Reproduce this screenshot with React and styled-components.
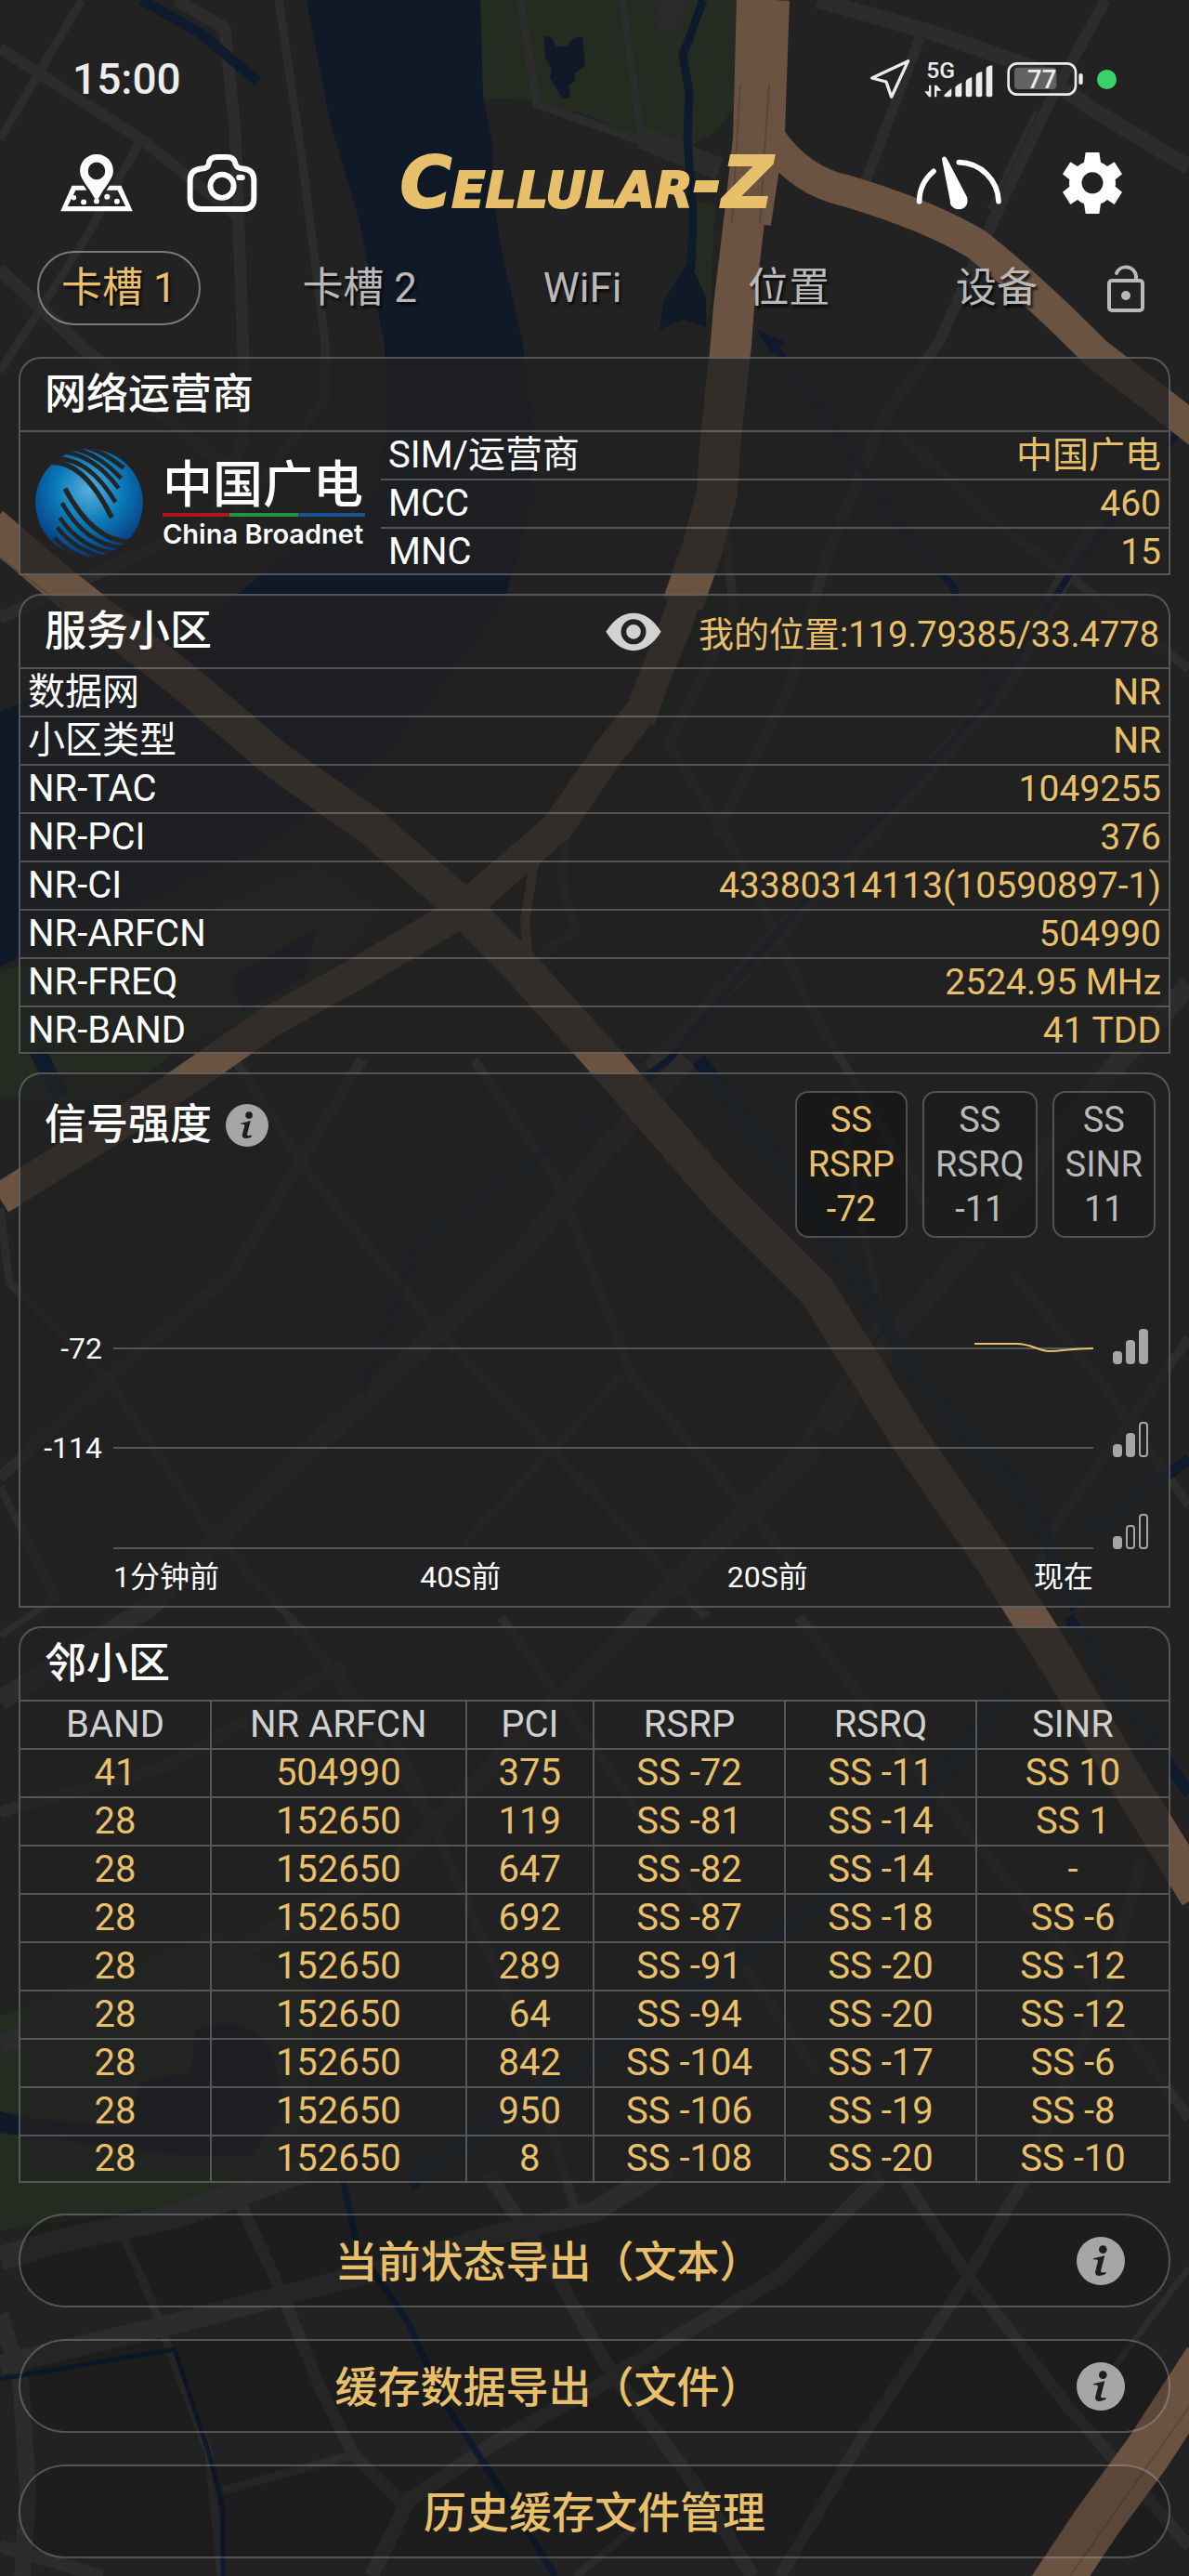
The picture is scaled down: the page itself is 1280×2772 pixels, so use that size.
import React, { useState } from "react"
import styled, { createGlobalStyle } from "styled-components"

const colors = {
  gold: "#e8c06c",
  white: "#ffffff",
  muted: "#b9b9b9",
  head: "#d0d0d0",
  line: "rgba(255, 255, 255, 0.24)",
  page: "#222222",
  panel: "rgba(34, 34, 34, 0.77)",
}

const GlobalStyle = createGlobalStyle`
  * { box-sizing: border-box; }
  body {
    margin: 0;
    background: ${colors.page};
    color: ${colors.white};
    font-family: Roboto, "Noto Sans CJK SC", sans-serif;
    font-size: 40px;
  }
  button { font: inherit; color: inherit; cursor: pointer; }
  svg { display: block; flex: none; }
`

const Page = styled.div`
  position: relative;
  padding: 58px 20px 19px;
  overflow: hidden;
`

const MapLayer = styled.svg`
  position: absolute;
  top: 0;
  left: 0;
  width: 100%;
  height: 100%;
  z-index: -1;
`

const StatusBar = styled.div`
  display: flex;
  align-items: center;
  justify-content: space-between;
  height: 54px;
  padding: 0 58px;
  color: #ececec;
`

const Clock = styled.time`
  font-size: 46px;
  font-weight: 500;
`

const StatusIcons = styled.div`
  display: flex;
  align-items: center;
  gap: 15px;
`

const RecordDot = styled.span`
  width: 21px;
  height: 21px;
  border-radius: 50%;
  background: #3bd16a;
`

const Header = styled.header`
  display: flex;
  align-items: center;
  justify-content: space-between;
  height: 90px;
  margin-top: 40px;
  padding: 0 52px 0 45px;
`

const Side = styled.div`
  display: flex;
  align-items: center;
  gap: ${p => p.$gap}px;
`

const IconButton = styled.button`
  display: block;
  padding: 0;
  border: 0;
  background: none;
`

const Brand = styled.h1`
  margin: 0;
  font-family: "DejaVu Sans", sans-serif;
  font-size: 76px;
  font-style: italic;
  font-weight: 700;
  font-variant: small-caps;
  line-height: 88px;
  white-space: nowrap;
  color: ${colors.gold};
  -webkit-text-stroke: 2px ${colors.gold};
`

const Nav = styled.nav`
  display: flex;
  align-items: center;
  gap: 49px;
  margin: 28px 0 34px;
  padding: 0 28px 0 20px;
`

const Tabs = styled.div`
  display: flex;
  flex: 1;
  justify-content: space-between;
`

const Tab = styled.button`
  height: 80px;
  padding: 0 24px;
  border: 2px solid ${p => (p.$active ? "rgba(255, 255, 255, 0.4)" : "transparent")};
  border-radius: 40px;
  background: none;
  font-size: 44px;
  line-height: 76px;
  white-space: nowrap;
  text-shadow: 2px 3px 3px rgba(0, 0, 0, 0.8);
  color: ${p => (p.$active ? colors.gold : colors.muted)};
`

const Panels = styled.main`
  display: flex;
  flex-direction: column;
  gap: 20px;
`

const Panel = styled.section`
  border: 2px solid ${colors.line};
  border-radius: 24px 24px 0 0;
  background: ${colors.panel};
`

const PanelHead = styled.div`
  display: flex;
  align-items: center;
  height: 79px;
  padding: 0 10px 0 26px;
  border-bottom: 2px solid ${colors.line};
`

const Title = styled.h2`
  margin: 0;
  font-size: 45px;
  font-weight: 500;
  line-height: 60px;
  white-space: nowrap;
`

const Position = styled.span`
  margin-left: 40px;
  font-size: 38px;
  color: ${colors.gold};
`

const HeadSpacer = styled.div`
  flex: 1;
`

const Rows = styled.dl`
  flex: 1;
  margin: 0;
`

const Row = styled.div`
  display: flex;
  justify-content: space-between;
  height: 52px;
  padding: 0 8px;
  line-height: 50px;
  border-bottom: 2px solid ${colors.line};
  &:last-child {
    height: 48px;
    border-bottom: 0;
  }
`

const Label = styled.dt`
  white-space: nowrap;
`

const Value = styled.dd`
  margin: 0;
  font-size: 39px;
  white-space: nowrap;
  color: ${colors.gold};
`

const Split = styled.div`
  display: flex;
`

const Carrier = styled.div`
  display: flex;
  align-items: center;
  gap: 20px;
  width: 388px;
  padding-left: 15px;
`

const CarrierNames = styled.div`
  display: flex;
  flex-direction: column;
  width: 218px;
`

const CarrierCn = styled.span`
  font-family: "Noto Sans CJK SC", sans-serif;
  font-size: 54px;
  font-weight: 500;
  line-height: 56px;
  white-space: nowrap;
`

const Stripe = styled.span`
  height: 4px;
  margin: 6px 0 2px;
  background: linear-gradient(90deg, #b01518 33%, #1f9148 33% 67%, #15548f 67%);
`

const CarrierEn = styled.span`
  font-family: Inter, sans-serif;
  font-size: 29px;
  font-weight: 600;
  line-height: 34px;
  white-space: nowrap;
`

const SignalPanel = styled(Panel)`
  padding-bottom: 10px;
`

const SignalTop = styled.div`
  display: flex;
  align-items: flex-start;
  padding: 18px 14px 0 26px;
`

const SignalTitle = styled.div`
  display: flex;
  align-items: center;
  flex: 1;
  gap: 15px;
  padding-top: 7px;
`

const Chips = styled.div`
  display: flex;
  gap: 16px;
`

const Chip = styled.button`
  display: flex;
  flex-direction: column;
  align-items: center;
  padding: 5px 12px;
  border: 2px solid ${colors.line};
  border-radius: 14px;
  background: rgba(0, 0, 0, ${p => (p.$active ? 0.25 : 0.12)});
  font-size: 38px;
  line-height: 48px;
  color: ${p => (p.$active ? colors.gold : colors.muted)};
`

const Chart = styled.div`
  display: grid;
  grid-template-columns: 88px 1fr 49px;
  column-gap: 12px;
  margin-top: 97px;
  padding-right: 20px;
`

const Plot = styled.svg`
  width: 100%;
  height: 239px;
`

const YLabels = styled.div`
  font-size: 32px;
  line-height: 44px;
  text-align: right;
`

const YLabel = styled.div`
  height: 107px;
`

const Levels = styled.div`
  display: flex;
  flex-direction: column;
  justify-content: space-between;
  padding-left: 9px;
`

const XLabels = styled.div`
  display: flex;
  grid-column: 2;
  margin-top: 8px;
  font-size: 32px;
  line-height: 42px;
`

const XLabel = styled.span`
  flex: ${p => (p.$last ? "none" : 1)};
  white-space: nowrap;
`

const Table = styled.table`
  width: 100%;
  table-layout: fixed;
  border-collapse: separate;
  border-spacing: 0;
`

const Cell = styled.td`
  height: 52px;
  padding: 0;
  border-bottom: 2px solid ${colors.line};
  border-right: 2px solid ${colors.line};
  font-size: 40px;
  font-weight: 400;
  line-height: 50px;
  text-align: center;
  color: ${colors.gold};
  &:last-child { border-right: 0; }
  tbody tr:last-child & {
    height: 48px;
    line-height: 48px;
    border-bottom: 0;
  }
`

const HeadCell = styled(Cell)`
  color: ${colors.head};
`

const Actions = styled.div`
  display: flex;
  flex-direction: column;
  gap: 34px;
  margin-top: 33px;
`

const Action = styled.div`
  display: flex;
  align-items: center;
  height: 101px;
  border: 2px solid ${colors.line};
  border-radius: 50px;
  background: rgba(0, 0, 0, 0.14);
`

const ActionButton = styled.button`
  flex: 1;
  height: 97px;
  padding: 0 0 6px;
  border: 0;
  background: none;
  font-size: 46px;
  font-weight: 500;
  color: ${colors.gold};
`

const ActionInfo = styled(IconButton)`
  width: 99px;
  flex: none;
`

const info = [
  ["数据网", "NR"],
  ["小区类型", "NR"],
  ["NR-TAC", "1049255"],
  ["NR-PCI", "376"],
  ["NR-CI", "43380314113(10590897-1)"],
  ["NR-ARFCN", "504990"],
  ["NR-FREQ", "2524.95 MHz"],
  ["NR-BAND", "41 TDD"],
]

const operator = [
  ["SIM/运营商", "中国广电"],
  ["MCC", "460"],
  ["MNC", "15"],
]

const signals = [
  ["RSRP", "-72"],
  ["RSRQ", "-11"],
  ["SINR", "11"],
]

const columns = [
  ["BAND", 3],
  ["NR ARFCN", 4],
  ["PCI", 2],
  ["RSRP", 3],
  ["RSRQ", 3],
  ["SINR", 3],
]

const neighbors = [
  ["41", "504990", "375", "SS -72", "SS -11", "SS 10"],
  ["28", "152650", "119", "SS -81", "SS -14", "SS 1"],
  ["28", "152650", "647", "SS -82", "SS -14", "-"],
  ["28", "152650", "692", "SS -87", "SS -18", "SS -6"],
  ["28", "152650", "289", "SS -91", "SS -20", "SS -12"],
  ["28", "152650", "64", "SS -94", "SS -20", "SS -12"],
  ["28", "152650", "842", "SS -104", "SS -17", "SS -6"],
  ["28", "152650", "950", "SS -106", "SS -19", "SS -8"],
  ["28", "152650", "8", "SS -108", "SS -20", "SS -10"],
]

const tabs = ["卡槽 1", "卡槽 2", "WiFi", "位置", "设备"]

// [path, width]
const streets = [
  ["M88 0 L0 150", 9],
  ["M0 52 L155 152 L262 238", 12],
  ["M152 150 L90 260 L0 400", 9],
  ["M0 290 L90 375 L240 500 L262 560", 14],
  ["M190 0 L242 30 L253 140 L262 380 L262 470 L230 560 L0 665", 13],
  ["M300 0 L325 170 L350 370 L350 430 L262 540", 9],
  ["M560 0 L578 112 L690 152", 9],
  ["M670 0 L690 145", 8],
  ["M690 148 L775 182", 24],
  ["M880 0 L1000 34 L1110 72 L1180 120 L1280 180", 17],
  ["M1190 0 L1130 110 L1075 225 L1010 370 L950 450 L890 600 L850 740 L770 900", 12],
  ["M992 36 L930 200", 11],
  ["M1115 120 L1065 225", 5],
  ["M780 560 L790 660 L720 800 L800 930 L870 1080 L1000 1300", 10],
  ["M950 450 L1070 560 L1150 620 L1280 720", 10],
  ["M1180 560 L1080 740 L880 960 L700 1150", 18],
  ["M610 880 L605 950 L620 1000 L580 1030", 10],
  ["M1280 1060 L1180 1170 L1080 1300 L960 1440 L890 1540", 22],
  ["M240 1120 L330 1260 L470 1430 L670 1640 L760 1740", 10],
  ["M510 1140 L600 1270 L680 1480 L800 1620 L870 1700", 10],
  ["M740 1140 L640 1250 L560 1350 L400 1500 L290 1600 L160 1730 L0 1830", 22],
  ["M390 1140 L250 1370 L120 1480 L0 1590", 12],
  ["M0 1300 L10 1380 L120 1490 L220 1640 L330 1760 L470 1970", 9],
  ["M670 1480 L500 1660", 8],
  ["M1280 1440 L1130 1650 L1100 1740", 10],
  ["M1090 1370 L1180 1480 L1280 1620", 10],
  ["M880 1560 L690 1740 L560 1870 L420 2010 L220 2120 L0 2200", 20],
  ["M900 1180 L950 1420 L860 1560 L680 1740", 8],
  ["M0 1600 L60 1720 L0 1760", 8],
  ["M310 1740 L430 1880 L560 2180 L620 2380", 10],
  ["M540 1740 L640 1880 L720 2000 L880 2230", 10],
  ["M860 1740 L1000 1920 L1180 2140 L1280 2280", 11],
  ["M1230 2000 L1190 2140 L1100 2350 L1030 2470 L930 2620 L840 2772", 13],
  ["M0 1950 L180 1900 L370 1790", 12],
  ["M0 2430 L70 2410 L190 2385 L330 2335", 26],
  ["M0 2545 L190 2500 L420 2440 L530 2405 L640 2380 L720 2330", 22],
  ["M258 2370 L300 2460 L345 2570 L380 2640 L440 2700", 13],
  ["M0 2490 L22 2560 L30 2680 L24 2772", 18],
  ["M130 2400 L165 2480 L190 2550 L225 2640 L238 2772", 9],
  ["M240 2680 L385 2640", 9],
  ["M526 2340 L600 2450 L650 2540 L760 2690 L810 2772", 15],
  ["M950 2340 L840 2450 L720 2520 L640 2570 L530 2630 L440 2690 L400 2772", 16],
  ["M970 2340 L1050 2460 L1150 2590 L1280 2740", 13],
  ["M1280 2440 L1190 2560", 7],
  ["M720 2690 L620 2772", 8],
  ["M0 2740 L110 2772", 14],
]

const streams = [
  ["M152 0 L215 35 L278 88", 11],
  ["M757 0 L735 60 L742 100 L740 150 L746 230 L744 290", 9],
  ["M832 370 L905 470 L965 560 L1025 630 L1070 740", 8],
  ["M1280 450 L1150 620 L1060 760 L900 930 L720 1140 L450 1340 L390 1500", 7],
  ["M752 1140 L860 1280 L950 1420 L985 1480 L1110 1620 L1160 1730", 16],
  ["M1280 1570 L1170 1650", 12],
  ["M1085 1820 L940 2010 L820 2090 L700 2180 L520 2290 L440 2350", 18],
  ["M368 2340 L385 2420 L440 2500 L475 2580 L540 2680 L598 2772", 7],
  ["M0 2560 L188 2528 L225 2640 L240 2700 L240 2772", 5],
  ["M40 1130 L65 1180", 18],
  ["M1150 1740 L1280 1930", 12],
]

const highways = [
  ["M815 0 L811 150 L802 230 L790 330 L787 370 L775 480 L772 530 L756 590 L735 650", 44],
  ["M742 630 L725 680 L704 730 L688 775", 34],
  ["M830 0 L825 140 L810 240", 40],
  ["M830 150 Q862 195 910 205 Q1000 232 1050 262 Q1100 300 1180 380 L1290 465", 34],
  ["M690 765 L655 810 L600 890 L490 985 L380 1050 L290 1100 L160 1190 L0 1290", 34],
  ["M-10 565 L60 625 L200 735 L300 820 L400 890 L490 968 L560 1040 L650 1140 L780 1290 L880 1390 L980 1550 L1070 1680 L1140 1790 L1210 1910 L1290 2040", 40],
  ["M600 880 L575 930 L565 990 L570 1050 L580 1070", 10],
  ["M1300 2540 L1235 2640 L1180 2715 L1130 2790", 52],
]

function MapBackground() {
  return (
    <MapLayer viewBox="0 0 1280 2772" preserveAspectRatio="xMidYMin slice" aria-hidden="true">
      <g fill="#242b20">
        <path d="M515 0 H805 L795 110 L770 142 L745 156 L690 150 L640 126 L575 108 L520 105 Z" />
        <path d="M742 215 L770 220 L764 345 L745 310 Z" />
        <path d="M0 1045 L180 1000 L340 930 L410 980 L320 1080 L200 1120 L120 1190 L0 1180 Z" />
        <path d="M0 2170 L230 2080 L340 2140 L330 2270 L300 2330 L204 2370 L0 2400 Z" />
      </g>
      <g fill="#101927">
        <path d="M330 0 H517 L520 105 L531 160 L529 200 L540 270 L563 370 L574 460 L572 540 L545 640 L490 720 L400 830 L270 920 L120 985 L0 1040 V765 L120 720 L210 680 L290 610 L360 570 L410 525 L415 460 L414 370 L385 230 L355 130 Z" />
        <path d="M586 40 Q594 36 598 50 H610 Q618 38 627 40 L630 70 L618 80 Q622 88 612 92 L614 104 Q606 110 602 100 L592 84 L594 74 L587 62 Z" />
        <path d="M742 280 L714 325 L710 355 L735 344 L760 352 V320 Z" />
        <path d="M815 355 L845 368 L830 380 Z" />
        <path d="M210 2185 Q260 2165 290 2200 L310 2270 L270 2320 L200 2320 L120 2310 L40 2300 L0 2295 V2272 L40 2280 L140 2290 L150 2240 L205 2230 Z" />
        <path d="M250 1050 L340 1000 L330 1050 L260 1090 Z" />
      </g>
      <path d="M705 0 H745 L725 40 L710 35 Z" fill="#2a2a2a" />
      <g fill="none" stroke="#2c2c2c" strokeLinejoin="round">
        {streets.map(([d, w]) => <path key={d} d={d} strokeWidth={w} />)}
      </g>
      <g fill="none" stroke="#0f1a2c" strokeLinejoin="round">
        {streams.map(([d, w]) => <path key={d} d={d} strokeWidth={w} />)}
      </g>
      <g fill="none" stroke="#6b5342" strokeLinejoin="round">
        {highways.map(([d, w]) => <path key={d} d={d} strokeWidth={w} />)}
      </g>
      <g fill="none" stroke="#59483a" strokeWidth="2">
        <path d="M797 90 L788 240" />
        <path d="M828 90 L818 240" />
        <path d="M0 600 L120 690" />
        <path d="M1280 2590 L1152 2772" />
      </g>
    </MapLayer>
  )
}

const InfoIcon = ({ size }) => (
  <svg width={size} height={size} viewBox="57 66 156 156">
    <circle cx="135" cy="144" r="78" fill="#a6a6a6" />
    <circle cx="142" cy="107" r="13" fill="#1e1e1e" />
    <path d="M111 136 Q130 132 148 127 L135 176 Q134 184 152 180 L151 186 Q118 200 117 180 L126 145 Q127 138 111 139 Z" fill="#1e1e1e" />
  </svg>
)

const LocationIcon = () => (
  <svg width="44" height="44" viewBox="109 43 132 132" fill="none" stroke="#ececec" strokeWidth="10" strokeLinejoin="round">
    <path d="M117 106 L234 51 L180 167 L163 118 Z" />
  </svg>
)

const CellIcon = () => (
  <svg width="74" height="52" viewBox="284 22 222 156" fill="#ececec">
    <text x="291" y="96" fontSize="74" fontWeight="500">5G</text>
    <path d="M299 120 V158 H306 V120 Z M285 140 L299 158 V140 Z M317 120 V158 H324 V120 Z M324 120 L340 138 H324 Z" />
    <path d="M348 152 L372 130 V152 Q372 158 366 158 H354 Q348 158 348 152 Z" />
    <path d="M384 128 Q384 122 405 112 V152 Q405 158 399 158 H390 Q384 158 384 152 Z" />
    <path d="M418 110 Q418 100 438 94 V152 Q438 158 432 158 H424 Q418 158 418 152 Z" />
    <path d="M451 90 Q451 80 471 76 V152 Q471 158 465 158 H457 Q451 158 451 152 Z" />
    <path d="M484 68 Q484 58 504 56 V152 Q504 158 498 158 H490 Q484 158 484 152 Z" />
  </svg>
)

const BatteryIcon = () => (
  <svg width="82" height="36" viewBox="551 51 246 108">
    <rect x="575" y="68" width="136" height="70" rx="12" fill="#626262" />
    <rect x="556" y="55" width="217" height="100" rx="28" fill="none" stroke="#ececec" strokeWidth="8" />
    <rect x="783" y="87" width="13" height="36" rx="6" fill="#ececec" />
    <text x="664" y="134" fontSize="82" fontWeight="500" textAnchor="middle" fill="#ececec">77</text>
  </svg>
)

const MapPinIcon = () => (
  <svg width="78" height="62" viewBox="75 78 234 187" fill="#fff">
    <path fillRule="evenodd" d="M192 78 C160 78 138 103 138 132 C138 160 165 180 186 222 H198 C219 180 246 160 246 132 C246 103 224 78 192 78 Z M192 104 A28 28 0 1 1 192 160 A28 28 0 1 1 192 104 Z" />
    <path d="M112 180 H150 L160 195 H124 L98 247 H286 L260 195 H224 L234 180 H272 L309 263 H75 Z" />
    <circle cx="192" cy="230" r="9" />
    <circle cx="118" cy="219" r="8" />
    <circle cx="150" cy="233" r="9" />
    <circle cx="226" cy="216" r="9" />
    <circle cx="258" cy="231" r="9" />
  </svg>
)

const CameraIcon = () => (
  <svg width="76" height="64" viewBox="484 73 230 192" fill="none" stroke="#fff" strokeWidth="18">
    <path d="M532 254 Q495 254 495 218 V160 Q495 125 532 122 Q554 122 556 106 Q558 84 584 84 H614 Q638 84 642 104 Q646 122 668 122 Q703 125 703 160 V218 Q703 254 666 254 Z" />
    <circle cx="599" cy="179" r="38" />
    <path d="M654 151 H665" strokeLinecap="round" />
  </svg>
)

const GaugeIcon = () => (
  <svg width="92" height="58" viewBox="259 352 276 174" fill="none" stroke="#fff" strokeWidth="17" strokeLinecap="round">
    <path d="M270 498 C270 460 288 425 316 401" />
    <path d="M398 372 C470 374 524 430 526 498" />
    <path d="M343 362 Q344 352 354 354 L360 362 L424 484 Q430 510 412 521 Q388 530 373 512 Q369 505 369 494 Z" fill="#fff" stroke="none" />
  </svg>
)

const GearIcon = () => (
  <svg width="64" height="66" viewBox="732 342 192 198" fill="#fff">
    <path fillRule="evenodd" d="M806 342 H850 L855 374 Q866 378 876 387 L899 373 L924 412 L902 430 Q904 441 902 452 L924 470 L899 510 L876 495 Q866 504 855 508 L850 540 H806 L801 508 Q790 504 780 495 L757 510 L732 470 L754 452 Q752 441 754 430 L732 412 L757 373 L780 387 Q790 378 801 374 Z M828 406 A34 34 0 1 0 828 475 A34 34 0 1 0 828 406 Z" />
  </svg>
)

const UnlockIcon = () => (
  <svg width="40" height="52" viewBox="0 0 40 52" fill="none" stroke={colors.muted} strokeWidth="4">
    <rect x="2" y="18" width="36" height="32" rx="3" />
    <path d="M31 18 V13 A11 11 0 0 0 10 10" strokeLinecap="round" />
    <circle cx="20" cy="34" r="5" fill={colors.muted} stroke="none" />
  </svg>
)

const EyeIcon = () => (
  <svg width="60" height="42" viewBox="37 38 180 125">
    <path d="M38 100 Q76 40 127 40 Q178 40 216 100 Q178 161 127 161 Q76 161 38 100 Z" fill="#d2d2d2" />
    <circle cx="127" cy="100" r="32" fill="none" stroke="#222" strokeWidth="17" />
  </svg>
)

const CarrierGlobe = () => (
  <svg width="118" height="118" viewBox="48 65 354 354">
    <defs>
      <radialGradient id="globe" cx="0.5" cy="0.38" r="0.62">
        <stop offset="0" stopColor="#5aaedb" />
        <stop offset="0.5" stopColor="#0a7bb8" />
        <stop offset="1" stopColor="#063a80" />
      </radialGradient>
      <clipPath id="globeClip"><circle cx="225" cy="242" r="174" /></clipPath>
    </defs>
    <g clipPath="url(#globeClip)">
      <circle cx="225" cy="242" r="174" fill="url(#globe)" />
      <g fill="none" stroke="#222527" strokeWidth="14">
        <path d="M85 114 Q200 92 298 290" strokeWidth="16" />
        <path d="M105 100 Q220 90 310 240" />
        <path d="M140 78 Q240 88 320 195" />
        <path d="M170 66 Q254 84 328 163" />
        <path d="M205 58 Q270 76 336 130" />
        <path d="M147 196 Q238 368 360 368" strokeWidth="16" />
        <path d="M137 243 Q216 380 335 386" />
        <path d="M130 290 Q200 392 310 404" />
        <path d="M122 322 Q180 396 275 418" />
        <path d="M113 355 Q155 404 225 424" />
      </g>
    </g>
  </svg>
)

// filled: how many of the three bars are solid
const LevelIcon = ({ filled }) => (
  <svg width="38" height="40" viewBox="0 0 38 40">
    {[[0, 25], [14, 13], [28, 1]].map(([x, y], i) =>
      i < filled
        ? <rect key={x} x={x} y={y} width="10" height={39 - y} rx="4" fill="#a6a6a6" />
        : <rect key={x} x={x + 1} y={y + 1} width="8" height={37 - y} rx="3" fill="none" stroke="#a6a6a6" strokeWidth="2" />
    )}
  </svg>
)

function Fields({ items }) {
  return (
    <Rows>
      {items.map(([label, value]) => (
        <Row key={label}>
          <Label>{label}</Label>
          <Value>{value}</Value>
        </Row>
      ))}
    </Rows>
  )
}

export default function App() {
  const [tab, setTab] = useState(0)
  const [signal, setSignal] = useState(0)

  return (
    <Page>
      <GlobalStyle />
      <MapBackground />
      <StatusBar>
        <Clock>15:00</Clock>
        <StatusIcons>
          <LocationIcon />
          <CellIcon />
          <BatteryIcon />
          <RecordDot />
        </StatusIcons>
      </StatusBar>

      <Header>
        <Side $gap={58}>
          <IconButton aria-label="地图"><MapPinIcon /></IconButton>
          <IconButton aria-label="相机"><CameraIcon /></IconButton>
        </Side>
        <Brand>Cellular-Z</Brand>
        <Side $gap={66}>
          <IconButton aria-label="测速"><GaugeIcon /></IconButton>
          <IconButton aria-label="设置"><GearIcon /></IconButton>
        </Side>
      </Header>

      <Nav>
        <Tabs>
          {tabs.map((name, i) => (
            <Tab key={name} $active={i === tab} onClick={() => setTab(i)}>{name}</Tab>
          ))}
        </Tabs>
        <IconButton aria-label="锁定"><UnlockIcon /></IconButton>
      </Nav>

      <Panels>
        <Panel>
          <PanelHead><Title>网络运营商</Title></PanelHead>
          <Split>
            <Carrier>
              <CarrierGlobe />
              <CarrierNames>
                <CarrierCn>中国广电</CarrierCn>
                <Stripe />
                <CarrierEn>China Broadnet</CarrierEn>
              </CarrierNames>
            </Carrier>
            <Fields items={operator} />
          </Split>
        </Panel>

        <Panel>
          <PanelHead>
            <Title>服务小区</Title>
            <HeadSpacer />
            <IconButton aria-label="显示位置"><EyeIcon /></IconButton>
            <Position>我的位置:119.79385/33.4778</Position>
          </PanelHead>
          <Fields items={info} />
        </Panel>

        <SignalPanel>
          <SignalTop>
            <SignalTitle>
              <Title>信号强度</Title>
              <IconButton aria-label="说明"><InfoIcon size={46} /></IconButton>
            </SignalTitle>
            <Chips>
              {signals.map(([name, value], i) => (
                <Chip key={name} $active={i === signal} onClick={() => setSignal(i)}>
                  <span>SS</span>
                  <span>{name}</span>
                  <span>{value}</span>
                </Chip>
              ))}
            </Chips>
          </SignalTop>
          <Chart>
            <YLabels>
              <YLabel>-72</YLabel>
              <YLabel>-114</YLabel>
            </YLabels>
            <Plot viewBox="0 0 1055 239" preserveAspectRatio="none">
              <path d="M0 22 H1055 M0 129 H1055 M0 237 H1055" stroke="rgba(255,255,255,0.24)" strokeWidth="2" />
              <path d="M927 17 H972 C990 17 995 25 1008 25 C1022 25 1030 22 1055 22" fill="none" stroke={colors.gold} strokeWidth="2" />
            </Plot>
            <Levels>
              <LevelIcon filled={3} />
              <LevelIcon filled={2} />
              <LevelIcon filled={1} />
            </Levels>
            <XLabels>
              <XLabel>1分钟前</XLabel>
              <XLabel>40S前</XLabel>
              <XLabel>20S前</XLabel>
              <XLabel $last>现在</XLabel>
            </XLabels>
          </Chart>
        </SignalPanel>

        <Panel>
          <PanelHead><Title>邻小区</Title></PanelHead>
          <Table>
            <colgroup>
              {columns.map(([name, units]) => <col key={name} style={{ width: `${units / 0.18}%` }} />)}
            </colgroup>
            <thead>
              <tr>{columns.map(([name]) => <HeadCell as="th" scope="col" key={name}>{name}</HeadCell>)}</tr>
            </thead>
            <tbody>
              {neighbors.map(row => (
                <tr key={row[2]}>{row.map((text, i) => <Cell key={i}>{text}</Cell>)}</tr>
              ))}
            </tbody>
          </Table>
        </Panel>
      </Panels>

      <Actions>
        <Action>
          <ActionButton>当前状态导出（文本）</ActionButton>
          <ActionInfo aria-label="文本导出说明"><InfoIcon size={52} /></ActionInfo>
        </Action>
        <Action>
          <ActionButton>缓存数据导出（文件）</ActionButton>
          <ActionInfo aria-label="文件导出说明"><InfoIcon size={52} /></ActionInfo>
        </Action>
        <Action>
          <ActionButton>历史缓存文件管理</ActionButton>
        </Action>
      </Actions>
    </Page>
  )
}
